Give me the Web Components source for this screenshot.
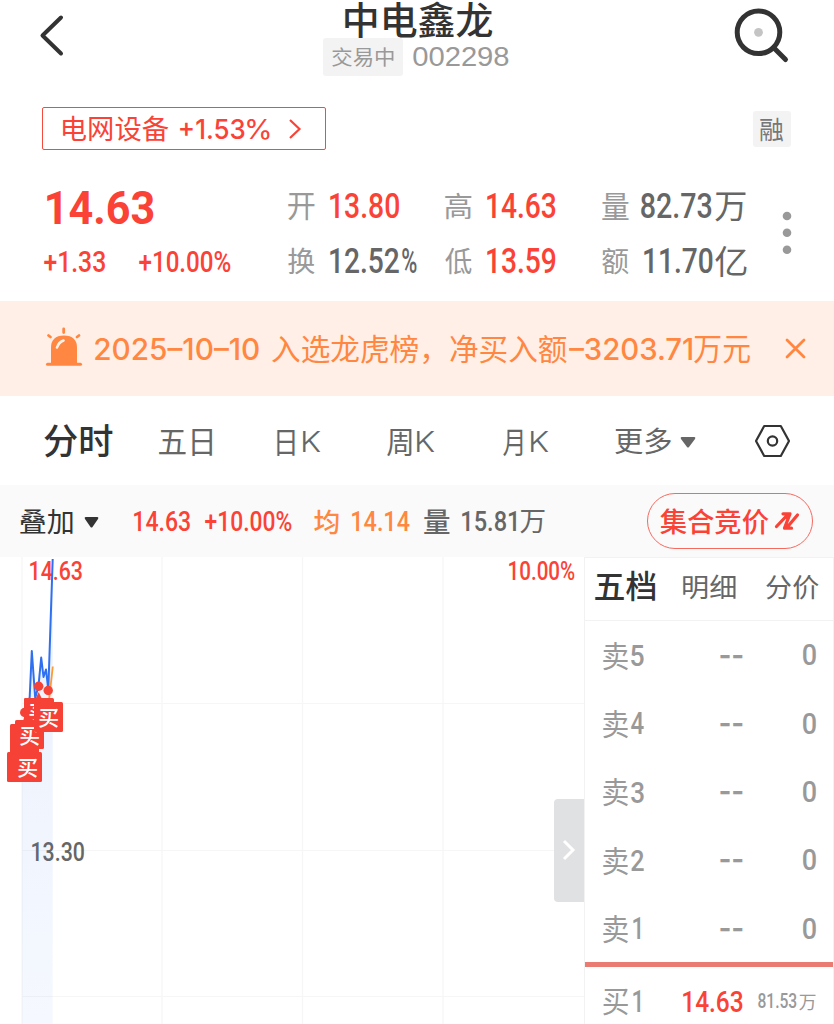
<!DOCTYPE html>
<html lang="zh-CN">
<head>
<meta charset="utf-8">
<title>中电鑫龙 002298</title>
<style>
html,body{margin:0;background:#fff}
body{width:834px;height:1024px;overflow:hidden;font-family:Roboto,"Noto Sans CJK SC",sans-serif}
</style>
</head>
<body>
<stock-app></stock-app>
<script>
const FAMILIES = {
  din: 'Roboto, "Noto Sans CJK SC", sans-serif',
  sans: 'Inter, "Noto Sans CJK SC", sans-serif',
  arial: '"Liberation Sans", "Noto Sans CJK SC", sans-serif'
};
const ctx = document.createElement('canvas').getContext('2d');

/* Text sized by its glyph box: w and h are the visible width and height. */
customElements.define('fit-text', class extends HTMLElement {
  connectedCallback() {
    if (this.shadowRoot) return;
    const a = (n, d) => this.getAttribute(n) ?? d;
    const w = +a('w', 20), h = +a('h', 20), weight = a('weight', '400');
    const fam = FAMILIES[a('font', 'din')], text = this.textContent;
    const measure = fs => { ctx.font = `${weight} ${fs}px ${fam}`; return ctx.measureText(text); };
    const m0 = measure(200);
    const fs = 200 * h / (m0.actualBoundingBoxAscent + m0.actualBoundingBoxDescent);
    const k = fs / 200;
    const left = -m0.actualBoundingBoxLeft * k;
    const ink = (m0.actualBoundingBoxRight + m0.actualBoundingBoxLeft) * k;
    const sx = (w - .8) / ink;
    const A = m0.fontBoundingBoxAscent * k, D = m0.fontBoundingBoxDescent * k;
    const base = (h - A - D) / 2 + A;
    const ty = m0.actualBoundingBoxAscent * k - base + +a('dy', 0);
    this.attachShadow({mode: 'open'}).innerHTML = `<style>
      :host{display:block;flex:none;width:${w}px;height:${h}px}
      span{display:block;width:max-content;white-space:pre;font:${weight} ${fs}px/${h}px ${fam};
        transform-origin:0 50%;transform:translate(${-left * sx + .2}px,${ty}px) scaleX(${sx})}
      </style><span><slot></slot></span>`;
  }
});

const define = (name, css, html) => {
  const t = document.createElement('template');
  t.innerHTML = `<style>*{box-sizing:border-box}svg{display:block;flex:none}.row{display:flex;align-items:center}${css}</style>${html}`;
  customElements.define(name, class extends HTMLElement {
    constructor() { super(); this.attachShadow({mode: 'open'}).append(t.content.cloneNode(true)); }
  });
};
/* gap before, text, width, height, attributes */
const T = (gap, text, w, h, attrs = '', style = '') =>
  `<fit-text style="margin-left:${gap}px;${style}" w="${w}" h="${h}" ${attrs}>${text}</fit-text>`;

define('stock-header', `
  :host{display:flex;height:100px;color:#333;align-items:flex-start}
  .back{margin:14px 0 0 39px}
  .mid{margin-left:257px;width:190px}
  .title{padding:1px 0 0 21px}
  .sub{height:38px;margin-top:1px}
  .tag{width:80px;height:38px;border-radius:3px;background:#f3f3f3;color:#999;padding-left:9px}
  .search{margin:6px 0 0 219px}`, `
  <svg class="back" width="27" height="44" viewBox="0 0 27 44" fill="none" stroke="#333" stroke-width="4" stroke-linecap="round" stroke-linejoin="round"><path d="M22 3.500L3.500 21.500L22 39.500"/></svg>
  <div class="mid">
    <div class="title">${T(0, '中电鑫龙', 148, 36, 'weight="500" dy=".2"', 'margin-left:.5px')}</div>
    <div class="sub row"><div class="tag row">${T(0, '交易中', 62, 19.500, 'dy="1"')}</div>${T(10, '002298', 96, 20, 'font="arial" dy=".2"', 'color:#999')}</div>
  </div>
  <svg class="search" width="58" height="60" viewBox="0 0 58 60" fill="none" stroke="#333" stroke-width="5" stroke-linecap="round"><circle cx="26.500" cy="26.300" r="21.300"/><path d="M42 42L53.500 53.500"/><circle cx="26.500" cy="26.300" r="4.400" fill="#c4c4c4" stroke="none"/></svg>`);

define('sector-bar', `
  :host{display:flex;height:72px;padding:7px 43px 0 42px;justify-content:space-between}
  .box{width:284px;height:43px;border:1.5px solid #f64a3e;border-radius:2px;color:#fa4336}
  .rong{width:38px;height:36px;margin-top:4px;background:#f3f3f3;border-radius:3px;color:#777;justify-content:center}`, `
  <div class="box row">${T(19.5, '电网设备', 106, 25.5, 'dy="1.3"')}${T(11.5, '+1.53', 65, 20, 'font="sans" weight="500" dy=".3"')}${T(2, '%', 23, 20, 'font="sans" dy=".3"')}
    <svg style="margin-left:17px" width="15" height="22" viewBox="0 0 15 22" fill="none" stroke="#fa4336" stroke-width="2.200"><path d="M3 2L12.500 11L3 20"/></svg></div>
  <div class="rong row">${T(0, '融', 23.5, 23.5, 'dy="1"')}</div>`);

define('quote-cell', `
  :host{display:flex;align-items:center;color:#fa4336}
  .label{color:#999;width:41px;flex:none}`, `
  <div class="label"><slot name="label"></slot></div><slot></slot>`);

const cell = (label, html, gray) => `<quote-cell ${gray ? 'style="color:#666"' : ''}><fit-text slot="label" w="27" h="26.5" dy="1">${label}</fit-text>${html}</quote-cell>`;
const Q = 'weight="500" dy="-.6"';
define('quote-panel', `
  :host{display:flex;height:129px;padding:7px 0 0 44px;color:#fa4336}
  .grid{display:grid;grid-template-columns:244px 157px 157px 180px;grid-template-rows:55px 55px}
  svg{margin:29px 0 0 0}`, `
  <div class="grid">
    <div class="row">${T(3, '14.63', 107, 34, 'weight="700" dy="0"')}</div>
    ${cell('开', T(.5, '13.80', 69.5, 25.5, Q))}
    ${cell('高', T(.5, '14.63', 69, 25.5, Q))}
    ${cell('量', T(-2, '82.73', 71, 25.5, Q) + T(3, '万', 31, 28.5, 'dy=".8"'), 1)}
    <div class="row">${T(0, '+1.33', 61.5, 22, Q)}${T(33.5, '+10.00%', 92, 22, Q)}</div>
    ${cell('换', T(.5, '12.52', 69.5, 25.5, Q) + T(2.5, '%', 15, 25.5, Q), 1)}
    ${cell('低', T(.5, '13.59', 69, 25.5, Q))}
    ${cell('额', T(1, '11.70', 69, 25.5, Q) + T(1.5, '亿', 32, 30), 1)}
  </div>
  <svg width="12" height="46" viewBox="0 0 12 46" fill="#999"><circle cx="5" cy="8" r="4.300"/><circle cx="5" cy="24.800" r="4.300"/><circle cx="5" cy="41.700" r="4.300"/></svg>`);

define('notice-bar', `
  :host{display:flex;align-items:center;height:95px;background:#ffefe6;color:#ff8741}`, `
  <svg style="margin:-3px 0 0 44px" width="40" height="42" viewBox="0 0 40 42" fill="#ff8741" stroke="#ff8741">
    <path stroke="none" d="M7 37V22Q7 9.500 20 9.500Q33 9.500 33 22V37Z"/><path d="M3.500 38.300H36.500" stroke-width="3" stroke-linecap="round"/>
    <path d="M19.700 3V6.500M4.500 9.500L6.500 11M35 9.500L33 11" stroke-width="2.800" stroke-linecap="round"/>
    <path d="M13 21.500Q14.500 16.500 19.500 14.500" fill="none" stroke="#fff3e9" stroke-width="2.600" stroke-linecap="round"/></svg>
  ${T(11, '2025–10–10', 164.5, 22, 'font="sans" weight="500" dy=".5"')}${T(12, '入选龙虎榜，净买入额', 295.5, 28.5, 'dy="1.2"')}${T(1.5, '–3203.71', 123.5, 22, 'font="sans" weight="500" dy=".5"')}${T(2, '万元', 56.5, 26, 'dy="1"')}
  <svg style="margin-left:34px" width="21" height="21" viewBox="0 0 21 21" stroke="#ff8741" stroke-width="2.800" stroke-linecap="round"><path d="M2 2L19 19M19 2L2 19"/></svg>`);

define('period-tabs', `:host{display:flex;align-items:center;height:89px;color:#666}`, `
  ${T(44, '分时', 69, 33, 'weight="500" dy=".8"', 'color:#333')}${T(45.5, '五日', 53.5, 26, 'dy="1.8"')}
  ${T(65, '日', 18, 25.5, 'dy="1.8"')}${T(8, 'K', 18, 21, 'font="sans" weight="300" dy=".5"')}
  ${T(66, '周', 25, 26, 'dy="1.8"')}${T(5, 'K', 18, 21, 'font="sans" weight="300" dy=".5"')}
  ${T(68, '月', 20, 26, 'dy="1.8"')}${T(8, 'K', 18, 21, 'font="sans" weight="300" dy=".5"')}
  ${T(66, '更多', 56.5, 26.5, 'dy="2.2"')}
  <svg style="margin:3px 0 0 8.500px" width="16" height="11" viewBox="0 0 16 11" fill="#666"><path d="M1.500 0H14.500Q16 .3 15 2L9 10Q8 11 7 10L1 2Q0 .3 1.500 0Z"/></svg>
  <svg style="margin-left:58px" width="37" height="34" viewBox="0 0 37 34" fill="none" stroke="#333" stroke-width="2.200" stroke-linejoin="round"><path d="M10.200 2H26.800L35 17L26.800 32H10.200L2 17Z"/><circle cx="18.500" cy="17" r="4.700"/></svg>`);

define('chart-toolbar', `
  :host{display:flex;align-items:center;height:72px;background:#fafafa;color:#fa4336}
  .btn{width:166px;height:56px;border:1.500px solid #f6695f;border-radius:28px}`, `
  ${T(20, '叠加', 53, 25, 'dy="1.5"', 'color:#333')}
  <svg style="margin:3px 0 0 11px" width="15" height="11" viewBox="0 0 15 11" fill="#333"><path d="M1.500 0H13.500Q15 .3 14 2L8.500 10Q7.500 11 6.500 10L1 2Q0 .3 1.500 0Z"/></svg>
  ${T(34.5, '14.63', 56.5, 20.5, 'weight="500" dy=".8"')}${T(15, '+10.00%', 87, 20.5, 'weight="500" dy=".8"')}
  ${T(22, '均', 25, 25, 'weight="500" dy=".2"', 'color:#ff8741')}${T(13, '14.14', 58, 20.5, 'weight="500" dy=".8"', 'color:#ff8741')}
  ${T(14, '量', 26, 24.5, 'weight="500" dy="1"', 'color:#666')}${T(11.5, '15.81', 54.5, 20.5, 'weight="500" dy=".8"', 'color:#666')}${T(4, '万', 25, 23, 'dy="1.5"', 'color:#666')}
  <div class="btn row" style="margin-left:101.500px">${T(12.5, '集合竞价', 109, 26, 'weight="500" dy="1"')}
    <svg style="margin-left:5px" width="26" height="20" viewBox="0 0 26 20" fill="none" stroke="#fa4336" stroke-width="3.200" stroke-linecap="round" stroke-linejoin="round"><path d="M2.500 15.500L14.500 2.800H9M23.500 4L12.500 17H10.500L16 2.800H14.500M10.500 17.200H17.500"/></svg></div>`);

define('trade-pin', `
  :host{position:absolute;width:29.300px;height:29.500px;overflow:hidden;border-radius:1.500px;background:#f64236;color:#fff;padding:5.800px 0 0 5.200px}`,
  `<slot></slot>`);
const buy = T(0, '买', 19.6, 18.5, 'weight="500" dy=".5"');

define('minute-chart', `
  :host{display:block;position:relative;width:584px;height:467px;overflow:hidden;color:#fa4336}
  .canvas{position:absolute;left:0;top:0}
  .labels{position:relative;height:100%}
  .top{justify-content:space-between;padding:5.700px 9.500px 0 29.500px}
  .midl{padding:262.500px 0 0 31.500px;color:#666}
  .handle{position:absolute;left:554px;top:241.500px;width:30px;height:103.500px;border-radius:4px 0 0 4px;background:#e0e1e2;justify-content:center}`, `
  <svg class="canvas" width="584" height="467" viewBox="0 557 584 467" fill="none">
    <path stroke="#f6f6f6" stroke-width="1.200" d="M22 557V1024M162 557V1024M302.500 557V1024M443 557V1024M22 703.500H584M22 850.500H584M22 996.500H584"/>
  </svg>
  <div class="labels">
    <div class="row top">${T(0, '14.63', 52.5, 18.5, 'weight="500"')}${T(0, '10.00%', 66, 18.5, 'weight="500"')}</div>
    <div class="midl">${T(0, '13.30', 52.5, 18.5, 'weight="500"')}</div>
  </div>
  <svg class="canvas" width="584" height="467" viewBox="0 557 584 467" fill="none">
    <defs><linearGradient id="g" x1="0" y1="557" x2="0" y2="1024" gradientUnits="userSpaceOnUse"><stop stop-color="#3b7cf0" stop-opacity=".11"/><stop offset="1" stop-color="#3b7cf0" stop-opacity=".05"/></linearGradient></defs>
    <path fill="url(#g)" d="M22 727L29.500 700L31.700 651L35 700L41 657L43.500 677L46 669L48.300 690L52.700 559V1024H22Z"/>
    <path stroke="#ff9933" stroke-width="1.800" d="M24 725L36 712L49 700L52.800 666.500"/>
    <path stroke="#2f70f0" stroke-width="2" stroke-linejoin="round" d="M24 722L29.700 697L31.800 651L35.200 698L38.500 686L41.200 657.500L43.500 677L46 669.500L48.300 690L52.700 559"/>
    <g fill="#f64236"><circle cx="38.700" cy="686.300" r="4.700"/><circle cx="48.200" cy="690.500" r="4.700"/><circle cx="24.700" cy="712.500" r="4.700"/><path d="M38.700 692L42 699H35.500Z"/></g>
  </svg>
  <trade-pin style="left:24.300px;top:140.500px"></trade-pin>
  <trade-pin style="left:24.300px;top:140.500px;width:10px;height:23px">${buy}</trade-pin>
  <trade-pin style="left:10px;top:166.500px"></trade-pin>
  <trade-pin style="left:14.500px;top:162.500px">${T(0, '买', 19.6, 18.5, 'weight="500" dy="1.3"')}</trade-pin>
  <trade-pin style="left:33.700px;top:145px">${buy}</trade-pin>
  <trade-pin style="left:7.300px;top:195px"></trade-pin>
  <trade-pin style="left:12.400px;top:195px">${buy}</trade-pin>
  <div class="handle row"><svg width="14" height="24" viewBox="0 0 14 24" fill="none" stroke="#fff" stroke-width="3"><path d="M2 3L11 12L2 21"/></svg></div>`);

customElements.define('order-row', class extends HTMLElement {
  connectedCallback() {
    const n = this.getAttribute('level'), bid = this.hasAttribute('bid');
    const side = T(18, bid ? '买' : '卖', 25.5, bid ? 25.5 : 27, `dy="${bid ? 1 : .8}"`) +
      T(n === '1' ? 4 : 2.5, n, n === '1' ? 7.5 : 13.3, 22, 'weight="500" dy=".3"', n === '1' ? 'margin-right:4.300px' : '');
    const rest = bid
      ? T(39, '14.63', 60, 22, 'weight="500" dy=".6"', 'color:#fa4336') + T(15, '81.53', 39, 14.5, 'weight="500" dy=".6"') + T(1.5, '万', 17, 15.5, 'dy=".8"')
      : T(75.8, '--', 23, 3.2, 'font="sans" weight="500" dy=".8"') + T(59.5, '0', 13.5, 21.5, 'weight="500" dy=".8"');
    this.attachShadow({mode: 'open'}).innerHTML = `<style>:host{display:flex;align-items:center;height:68.300px;color:#999}:host([bid]){height:69px}</style>${side}${rest}`;
  }
});

define('order-book', `
  :host{display:block;width:250px;height:467px;overflow:hidden;border-left:1.500px solid #f2f2f2;border-right:1.500px solid #f2f2f2;border-top:1px solid #f2f2f2;background:#fff}
  .tabs{height:63px;border-bottom:1.500px solid #f2f2f2;color:#666;padding-bottom:4px}
  .split{height:4.500px;background:#ea7b73;margin-top:0}`, `
  <div class="tabs row">${T(10, '五档', 61, 29.5, 'weight="500"', 'color:#333')}${T(26.5, '明细', 53, 24.5)}${T(30, '分价', 53, 24.5)}</div>
  <order-row level="5"></order-row><order-row level="4"></order-row><order-row level="3"></order-row><order-row level="2"></order-row><order-row level="1"></order-row>
  <div class="split"></div>
  <order-row bid level="1"></order-row>`);

define('stock-app', `
  :host{display:block;width:834px;height:1024px;overflow:hidden;background:#fff}
  main{display:flex}`, `
  <stock-header></stock-header><sector-bar></sector-bar><quote-panel></quote-panel>
  <notice-bar></notice-bar><period-tabs></period-tabs><chart-toolbar></chart-toolbar>
  <main><minute-chart></minute-chart><order-book></order-book></main>`);
</script>
</body>
</html>
